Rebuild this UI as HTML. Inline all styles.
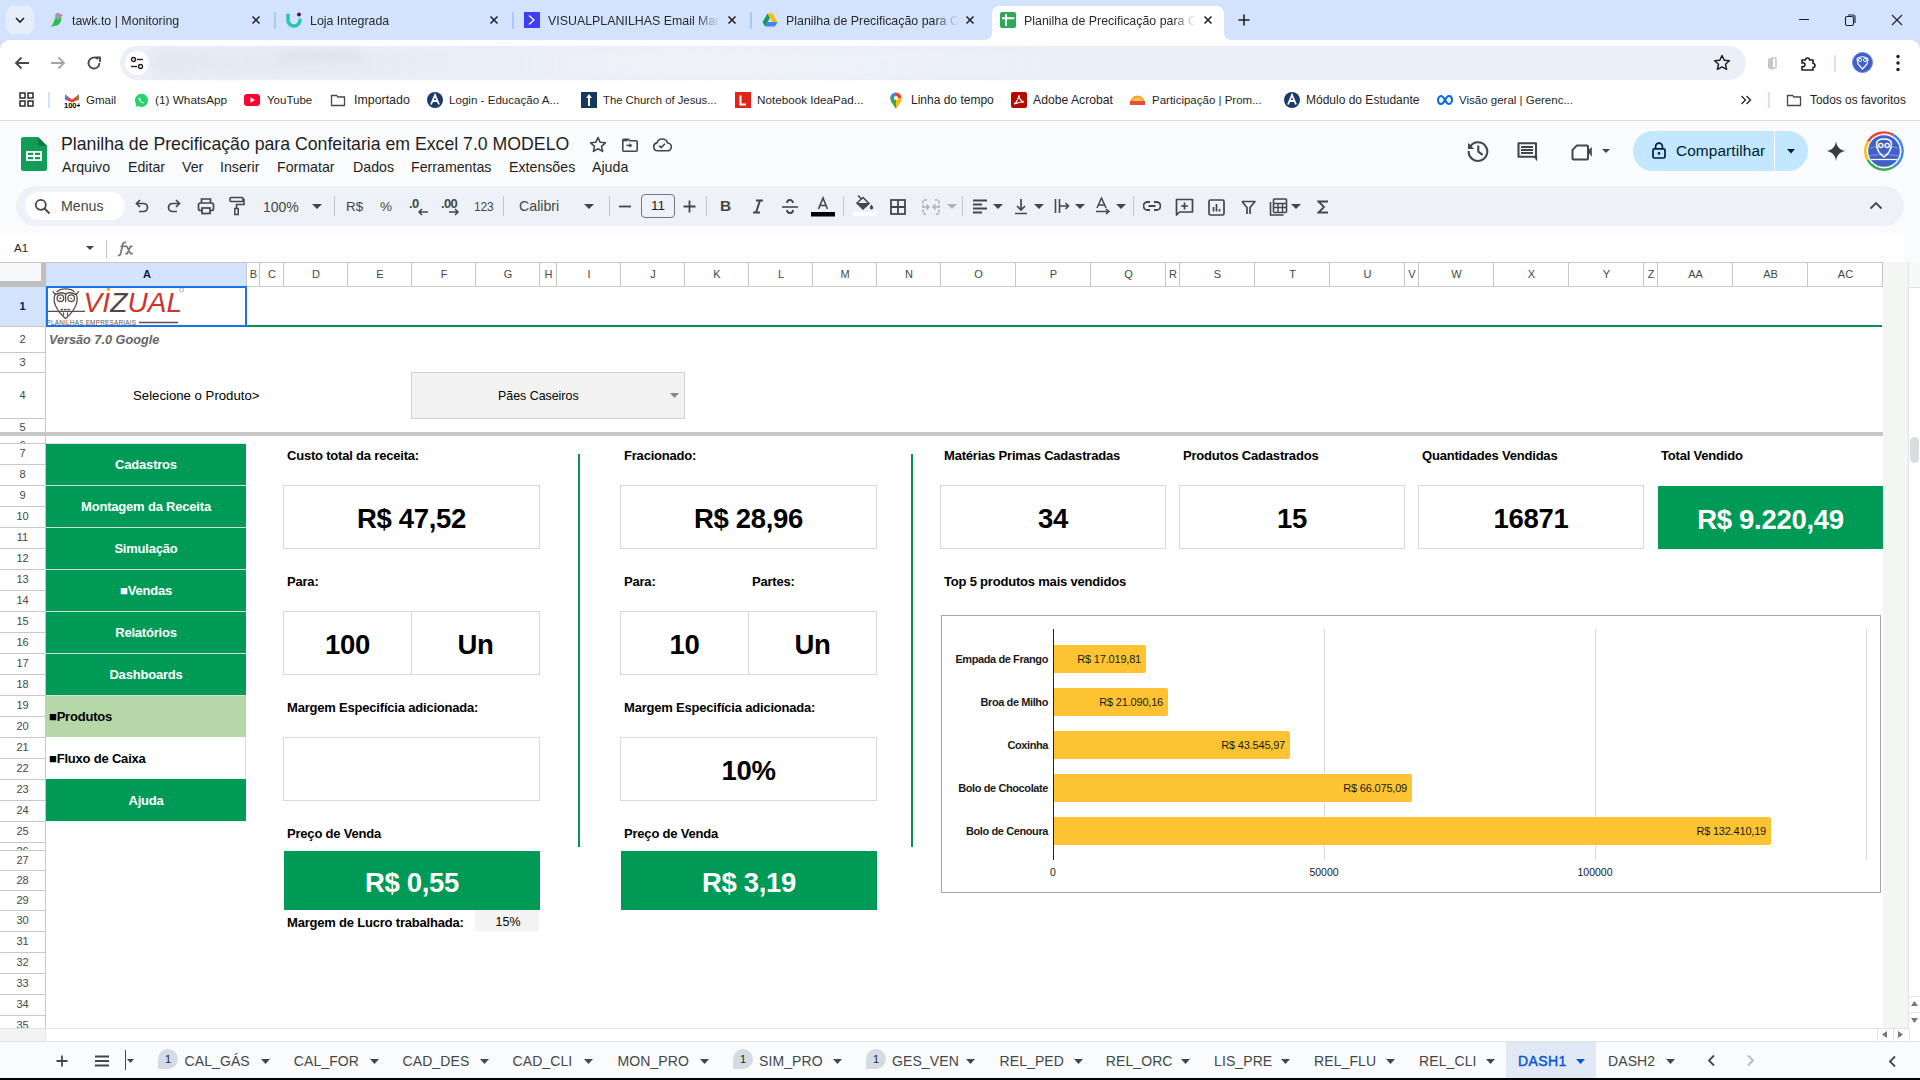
<!DOCTYPE html>
<html><head><meta charset="utf-8">
<style>
*{margin:0;padding:0;box-sizing:border-box}
html,body{width:1920px;height:1080px;overflow:hidden;background:#fff;font-family:"Liberation Sans",sans-serif;color:#1f1f1f}
.a{position:absolute}
svg{display:block}
/* chrome */
#tabstrip{left:0;top:0;width:1920px;height:56px;background:#d3e3fd}
.tab{position:absolute;top:6px;height:34px;width:238px}
.tab .fav{position:absolute;left:8px;top:6px;width:16px;height:16px}
.tab .tt{position:absolute;left:32px;top:6px;font-size:12.4px;color:#2a2a2a;white-space:nowrap;overflow:hidden;width:172px;line-height:18px;-webkit-mask-image:linear-gradient(90deg,#000 86%,transparent)}
.tab .x{position:absolute;left:208px;top:6px;width:16px;height:16px}
.sep{position:absolute;top:12px;width:2px;height:17px;background:#a8c7fa;border-radius:1px}
#toolbar{left:0;top:40px;width:1920px;height:46px;background:#fff;border-radius:10px 10px 0 0}
#omni{left:120px;top:46px;width:1626px;height:34px;border-radius:17px;background:#ebeff7}
#bmbar{left:0;top:86px;width:1920px;height:34px;background:#fff}
.bm{position:absolute;top:92px;height:16px;font-size:12.4px;line-height:16px;color:#1f1f1f;white-space:nowrap}
.bm i{position:absolute;left:0;top:0;width:16px;height:16px;display:block}
.bm span{position:absolute;left:22px;top:0}
.ch{position:absolute;top:263px;height:23px;line-height:23px;text-align:center;padding-left:2px;font-size:11px;color:#444746}
.rh{position:absolute;left:0;width:45px;overflow:hidden;text-align:center;font-size:11px;color:#444746}
.t{position:absolute;white-space:nowrap;line-height:16px}
.lb{font-size:13px;font-weight:bold;color:#000;letter-spacing:-0.2px}
.btn{position:absolute;left:46px;width:200px;font-size:13px;font-weight:bold;text-align:center;line-height:44px;white-space:nowrap;letter-spacing:-0.2px}
.g{background:#009a57;color:#fff}
.box{position:absolute;border:1px solid #d9d9d9;background:#fff;text-align:center;font-size:27.5px;font-weight:bold;color:#000;display:flex;align-items:center;justify-content:center;padding-top:4px;letter-spacing:-0.3px}
.gbox{background:#009a57;border-color:#009a57;color:#fff}
.bar{position:absolute;left:1054px;height:28px;background:#fdc333;border-radius:0 2px 2px 0;font-size:11px;color:#1a1a1a;text-align:right;padding-right:5px;line-height:28px;white-space:nowrap;letter-spacing:-0.2px}
.cl{position:absolute;left:900px;width:148px;text-align:right;font-size:11px;font-weight:bold;color:#1a1a1a;line-height:16px;white-space:nowrap;letter-spacing:-0.4px}
.ax{position:absolute;width:60px;text-align:center;font-size:10.5px;color:#1a1a1a;line-height:14px}
.stab{position:absolute;top:1052px;font-size:14px;line-height:18px;color:#444746;white-space:nowrap;letter-spacing:0.1px}
</style></head><body>
<!-- ============ CHROME TAB STRIP ============ -->
<div id="tabstrip" class="a">
  <div class="a" style="left:6px;top:6px;width:28px;height:28px;border-radius:8px;background:#e6eefc"></div>
  <svg class="a" style="left:13px;top:14px" width="14" height="12" viewBox="0 0 14 12"><path d="M3 4l4 4 4-4" fill="none" stroke="#1f1f1f" stroke-width="1.6"/></svg>

  <!-- tab1 -->
  <div class="tab" style="left:40px">
    <svg class="fav" viewBox="0 0 16 16"><path d="M2 15c2-1 3-3 4-6 1-3 3-5 5-5 2 0 3 2 2 5-1 3-4 5-7 5z" fill="#2dbf4b"/><circle cx="10" cy="4" r="3" fill="#9aa0a6"/><path d="M12 2l3 1-2 2z" fill="#f06292"/><path d="M9 1l2 1-2 1z" fill="#f06292"/></svg>
    <div class="tt">tawk.to | Monitoring</div>
    <svg class="x" viewBox="0 0 16 16"><path d="M4.5 4.5l7 7M11.5 4.5l-7 7" stroke="#1f1f1f" stroke-width="1.5"/></svg>
  </div>
  <div class="sep" style="left:274px"></div>
  <!-- tab2 -->
  <div class="tab" style="left:278px">
    <svg class="fav" viewBox="0 0 16 16"><path d="M2 3v5a6 6 0 0 0 12 0" fill="none" stroke="#2ec4b6" stroke-width="3.6" stroke-linecap="round"/><circle cx="13" cy="2.5" r="2" fill="#3a1f5d"/></svg>
    <div class="tt">Loja Integrada</div>
    <svg class="x" viewBox="0 0 16 16"><path d="M4.5 4.5l7 7M11.5 4.5l-7 7" stroke="#1f1f1f" stroke-width="1.5"/></svg>
  </div>
  <div class="sep" style="left:512px"></div>
  <!-- tab3 -->
  <div class="tab" style="left:516px">
    <svg class="fav" viewBox="0 0 16 16"><rect width="16" height="16" fill="#3b3ff0"/><path d="M5 3.5l5 4.5-5 4.5" fill="none" stroke="#fff" stroke-width="1.3"/></svg>
    <div class="tt">VISUALPLANILHAS Email Marketing</div>
    <svg class="x" viewBox="0 0 16 16"><path d="M4.5 4.5l7 7M11.5 4.5l-7 7" stroke="#1f1f1f" stroke-width="1.5"/></svg>
  </div>
  <div class="sep" style="left:750px"></div>
  <!-- tab4 -->
  <div class="tab" style="left:754px">
    <svg class="fav" viewBox="0 0 16 16"><path d="M5.5 1.5h5l5 8.5h-5z" fill="#fbbc04"/><path d="M5.5 1.5L0.5 10l2.5 4.5 5-8.5z" fill="#0f9d58"/><path d="M3 14.5h10l2.5-4.5h-10z" fill="#4285f4"/></svg>
    <div class="tt">Planilha de Precificação para Confeitaria</div>
    <svg class="x" viewBox="0 0 16 16"><path d="M4.5 4.5l7 7M11.5 4.5l-7 7" stroke="#1f1f1f" stroke-width="1.5"/></svg>
  </div>
  <!-- active tab -->
  <svg class="a" style="left:984px;top:6px" width="248" height="34" viewBox="0 0 248 34"><path d="M0 34c6 0 8-3 8-8V8c0-5 3-8 8-8h216c5 0 8 3 8 8v18c0 5 2 8 8 8z" fill="#fff"/></svg>
  <div class="tab" style="left:992px">
    <svg class="fav" viewBox="0 0 16 16"><rect x="0" y="0" width="16" height="16" rx="2" fill="#2ea85a"/><path d="M2 6.3h12.3M6 2v12" stroke="#fff" stroke-width="2"/></svg>
    <div class="tt">Planilha de Precificação para Confeitaria</div>
    <svg class="x" viewBox="0 0 16 16"><path d="M4.5 4.5l7 7M11.5 4.5l-7 7" stroke="#1f1f1f" stroke-width="1.5"/></svg>
  </div>
  <svg class="a" style="left:1236px;top:12px" width="16" height="16" viewBox="0 0 16 16"><path d="M8 2.5v11M2.5 8h11" stroke="#1f1f1f" stroke-width="1.6"/></svg>
  <!-- window controls -->
  <svg class="a" style="left:1798px;top:12px" width="14" height="14" viewBox="0 0 14 14"><path d="M1 7.5h10" stroke="#1f1f1f" stroke-width="1"/></svg>
  <svg class="a" style="left:1844px;top:13px" width="14" height="14" viewBox="0 0 14 14"><rect x="1.5" y="3.5" width="8" height="9" rx="1.5" fill="none" stroke="#1f1f1f" stroke-width="1.1"/><path d="M4 2h5a2 2 0 0 1 2 2v6" fill="none" stroke="#1f1f1f" stroke-width="1.1"/></svg>
  <svg class="a" style="left:1891px;top:14px" width="12" height="12" viewBox="0 0 12 12"><path d="M1 1l10 10M11 1L1 11" stroke="#1f1f1f" stroke-width="1.1"/></svg>
</div>

<!-- ============ CHROME TOOLBAR ============ -->
<div id="toolbar" class="a"></div>
<svg class="a" style="left:12px;top:54px" width="20" height="18" viewBox="0 0 20 18"><path d="M17 9H4M9.5 3.5L4 9l5.5 5.5" fill="none" stroke="#474747" stroke-width="1.8"/></svg>
<svg class="a" style="left:48px;top:54px" width="20" height="18" viewBox="0 0 20 18"><path d="M3 9h13M10.5 3.5L16 9l-5.5 5.5" fill="none" stroke="#a5a5a5" stroke-width="1.8"/></svg>
<svg class="a" style="left:85px;top:54px" width="18" height="18" viewBox="0 0 18 18"><path d="M14.5 9a5.5 5.5 0 1 1-1.6-3.9" fill="none" stroke="#474747" stroke-width="1.8"/><path d="M10.5 3.5h4.5V8" fill="none" stroke="#474747" stroke-width="1.8"/></svg>
<div id="omni" class="a"></div>
<div class="a" style="left:125px;top:51px;width:24px;height:24px;border-radius:12px;background:#fff"></div>
<svg class="a" style="left:130px;top:56px" width="14" height="14" viewBox="0 0 14 14"><circle cx="3.5" cy="3.5" r="2" fill="none" stroke="#1f1f1f" stroke-width="1.4"/><path d="M7 3.5h6" stroke="#1f1f1f" stroke-width="1.4"/><circle cx="10.5" cy="10.5" r="2" fill="none" stroke="#1f1f1f" stroke-width="1.4"/><path d="M1 10.5h6" stroke="#1f1f1f" stroke-width="1.4"/></svg>
<!-- blurred url -->
<div class="a" style="left:150px;top:50px;width:900px;height:26px;background:linear-gradient(90deg,rgba(226,231,240,0.9),rgba(232,236,244,0.8) 30%,rgba(240,243,249,0.7) 60%,rgba(236,240,248,0.6) 100%);filter:blur(5px);border-radius:13px"></div>
<div class="a" style="left:280px;top:52px;width:80px;height:8px;background:rgba(210,215,225,0.5);filter:blur(4px)"></div>
<svg class="a" style="left:1712px;top:53px" width="20" height="20" viewBox="0 0 20 20"><path d="M10 2.5l2.2 4.8 5.2.5-3.9 3.5 1.1 5.1L10 13.8l-4.6 2.6 1.1-5.1-3.9-3.5 5.2-.5z" fill="none" stroke="#1f1f1f" stroke-width="1.5" stroke-linejoin="round"/></svg>
<svg class="a" style="left:1764px;top:54px" width="18" height="18" viewBox="0 0 18 18"><path d="M4 5l5-2v13l-5-2z" fill="#c4c7c5"/><rect x="8" y="4" width="4" height="10" rx="1" fill="none" stroke="#c4c7c5" stroke-width="1.5"/></svg>
<svg class="a" style="left:1799px;top:53px" width="20" height="20" viewBox="0 0 20 20"><path d="M3 7h3.5a2 2 0 1 1 4 0H14v3.5a2 2 0 1 1 0 4V17H3v-3.5a2 2 0 1 0 0-3.5z" fill="none" stroke="#1f1f1f" stroke-width="1.6" stroke-linejoin="round"/></svg>
<div class="a" style="left:1834px;top:55px;width:2px;height:17px;background:#d3e3fd"></div>
<svg class="a" style="left:1852px;top:52px" width="21" height="21" viewBox="0 0 21 21"><circle cx="10.5" cy="10.5" r="10" fill="#3f5fc9"/><circle cx="10.5" cy="10.5" r="10" fill="none" stroke="#6b86d9" stroke-width="1"/><path d="M5 7c2-3 9-3 11 0l-1 5-4.5 5-4.5-5z" fill="none" stroke="#fff" stroke-width="1.2"/><circle cx="8" cy="8" r="1.6" fill="none" stroke="#fff" stroke-width="1"/><circle cx="13" cy="8" r="1.6" fill="none" stroke="#fff" stroke-width="1"/></svg>
<svg class="a" style="left:1890px;top:53px" width="16" height="20" viewBox="0 0 16 20"><circle cx="8" cy="3.5" r="1.7" fill="#1f1f1f"/><circle cx="8" cy="10" r="1.7" fill="#1f1f1f"/><circle cx="8" cy="16.5" r="1.7" fill="#1f1f1f"/></svg>

<!-- ============ BOOKMARKS ============ -->
<div id="bmbar" class="a"></div>
<svg class="a" style="left:19px;top:92px" width="15" height="15" viewBox="0 0 15 15"><g fill="none" stroke="#1f1f1f" stroke-width="1.4"><rect x="1" y="1" width="5" height="5"/><rect x="9" y="1" width="5" height="5"/><rect x="1" y="9" width="5" height="5"/><rect x="9" y="9" width="5" height="5"/></g></svg>
<div class="a" style="left:48px;top:92px;width:2px;height:16px;background:#d3e3fd"></div>
<svg class="a" style="left:64px;top:92px" width="16" height="16" viewBox="0 0 16 16"><path d="M1 2.5l7 5 7-5v5l-7 3-7-3z" fill="#ea4335"/><path d="M1 2.5v5l2 1V4z" fill="#4285f4"/><path d="M15 2.5v5l-2 1V4z" fill="#34a853"/><text x="0" y="15.5" font-size="7.5" font-family="Liberation Sans" font-weight="bold" fill="#000">100+</text></svg>
<div class="bm" style="left:86px;font-size:11.5px">Gmail</div>
<svg class="a" style="left:134px;top:93px" width="15" height="15" viewBox="0 0 15 15"><circle cx="7.5" cy="7.3" r="6.6" fill="#25d366"/><path d="M1.5 14l1-3.5 3 2z" fill="#25d366"/><path d="M5 4.5c-.7.6-.6 1.8.3 3 1 1.4 2.3 2.5 3.6 2.8.8.2 1.4-.2 1.6-.8l-1.3-.8-.7.6c-.8-.3-1.8-1.2-2.2-2l.5-.7-.6-1.4z" fill="#fff"/></svg>
<div class="bm" style="left:155px;font-size:11.8px">(1) WhatsApp</div>
<svg class="a" style="left:244px;top:94px" width="16" height="12" viewBox="0 0 16 12"><rect width="16" height="12" rx="3" fill="#ff0033"/><path d="M6.5 3.3v5.4L11 6z" fill="#fff"/></svg>
<div class="bm" style="left:267px;font-size:11.5px">YouTube</div>
<svg class="a" style="left:330px;top:92px" width="16" height="16" viewBox="0 0 16 16"><path d="M1.5 3.5h5l1.5 1.5h6.5v8.5h-13z" fill="none" stroke="#474747" stroke-width="1.3"/></svg>
<div class="bm" style="left:354px;font-size:12.4px">Importado</div>
<svg class="a" style="left:427px;top:92px" width="16" height="16" viewBox="0 0 16 16"><circle cx="8" cy="8" r="8" fill="#1b3a6b"/><path d="M4 12.5L8 3l4 9.5M5.5 9h5" fill="none" stroke="#fff" stroke-width="1.8"/></svg>
<div class="bm" style="left:449px;font-size:11.6px">Login - Educação A...</div>
<svg class="a" style="left:581px;top:92px" width="16" height="16" viewBox="0 0 16 16"><rect width="16" height="16" fill="#16385c"/><path d="M8 2l3 4H9v8H7V6H5z" fill="#fff"/></svg>
<div class="bm" style="left:603px;font-size:11.3px">The Church of Jesus...</div>
<svg class="a" style="left:735px;top:92px" width="16" height="16" viewBox="0 0 16 16"><rect width="16" height="16" fill="#e2231a"/><path d="M5.5 3.5v9h5.5" fill="none" stroke="#fff" stroke-width="2"/></svg>
<div class="bm" style="left:757px;font-size:11.7px">Notebook IdeaPad...</div>
<svg class="a" style="left:890px;top:92px" width="12" height="17" viewBox="0 0 12 17"><path d="M6 16.5C3 12 .5 9.5.5 6a5.5 5.5 0 0 1 11 0c0 3.5-2.5 6-5.5 10.5z" fill="#ea4335"/><path d="M6 16.5C3 12 .5 9.5.5 6c0-1.5.5-2.8 1.5-3.8L6 6z" fill="#34a853"/><path d="M.5 6A5.5 5.5 0 0 1 6 .5V6z" fill="#4285f4"/><path d="M11.5 6c0 3.5-2.5 6-5.5 10.5V6z" fill="#fbbc04"/><circle cx="6" cy="6" r="2" fill="#fff"/></svg>
<div class="bm" style="left:911px;font-size:12px">Linha do tempo</div>
<svg class="a" style="left:1011px;top:92px" width="16" height="16" viewBox="0 0 16 16"><rect width="16" height="16" rx="2" fill="#b30b00"/><path d="M3 12c2-1 4-4 5-9 0 3 2 6 5 7-3 0-7 1-10 2z" fill="none" stroke="#fff" stroke-width="1.1"/></svg>
<div class="bm" style="left:1033px;font-size:12.2px">Adobe Acrobat</div>
<svg class="a" style="left:1129px;top:93px" width="17" height="14" viewBox="0 0 17 14"><path d="M1 10a7.5 7.5 0 0 1 15 0z" fill="#f5a623"/><path d="M3 10a5.5 5.5 0 0 1 11 0z" fill="#f7c35f"/><rect x="1" y="8" width="15" height="4" fill="#e94e3a"/></svg>
<div class="bm" style="left:1152px;font-size:11.5px">Participação | Prom...</div>
<svg class="a" style="left:1284px;top:92px" width="16" height="16" viewBox="0 0 16 16"><circle cx="8" cy="8" r="8" fill="#1b3a6b"/><path d="M4 12.5L8 3l4 9.5M5.5 9h5" fill="none" stroke="#fff" stroke-width="1.8"/></svg>
<div class="bm" style="left:1306px;font-size:12px">Módulo do Estudante</div>
<svg class="a" style="left:1437px;top:94px" width="16" height="12" viewBox="0 0 16 12"><path d="M4 10c-2 0-3-2-3-4s1.5-4 3-4c2 0 3 2 4 4s2 4 4 4c1.5 0 3-2 3-4s-1-4-3-4c-2 0-3 2-4 4s-2 4-4 4z" fill="none" stroke="#0668e1" stroke-width="2"/></svg>
<div class="bm" style="left:1459px;font-size:11.5px">Visão geral | Gerenc...</div>
<svg class="a" style="left:1740px;top:94px" width="12" height="12" viewBox="0 0 12 12"><path d="M1.5 2l4 4-4 4M6.5 2l4 4-4 4" fill="none" stroke="#1f1f1f" stroke-width="1.3"/></svg>
<div class="a" style="left:1768px;top:92px;width:2px;height:16px;background:#d3e3fd"></div>
<svg class="a" style="left:1786px;top:92px" width="16" height="16" viewBox="0 0 16 16"><path d="M1.5 3.5h5l1.5 1.5h6.5v8.5h-13z" fill="none" stroke="#474747" stroke-width="1.3"/></svg>
<div class="bm" style="left:1810px;font-size:11.9px">Todos os favoritos</div>
<div class="a" style="left:0;top:120px;width:1920px;height:1px;background:#dadce0"></div>


<!-- ============ SHEETS HEADER ============ -->
<div class="a" style="left:0;top:121px;width:1920px;height:112px;background:#f9fbfd"></div>
<svg class="a" style="left:21px;top:137px" width="26" height="34" viewBox="0 0 26 34"><path d="M2.5 0H17l9 9v22.5a2.5 2.5 0 0 1-2.5 2.5h-21A2.5 2.5 0 0 1 0 31.5v-29A2.5 2.5 0 0 1 2.5 0z" fill="#0f9d58"/><path d="M17 0l9 9h-6.5A2.5 2.5 0 0 1 17 6.5z" fill="#0a7a43"/><path d="M5 14h16v10H5z" fill="#fff"/><path d="M6.8 15.8h5.3v2.3H6.8zM13.9 15.8h5.3v2.3h-5.3zM6.8 19.9h5.3v2.3H6.8zM13.9 19.9h5.3v2.3h-5.3z" fill="#0f9d58"/></svg>
<div class="a" style="left:61px;top:133px;font-size:17.7px;line-height:22px;color:#1f1f1f;white-space:nowrap">Planilha de Precificação para Confeitaria em Excel 7.0 MODELO</div>
<svg class="a" style="left:588px;top:135px" width="20" height="20" viewBox="0 0 20 20"><path d="M10 2.5l2.2 4.8 5.2.5-3.9 3.5 1.1 5.1L10 13.8l-4.6 2.6 1.1-5.1-3.9-3.5 5.2-.5z" fill="none" stroke="#444746" stroke-width="1.6" stroke-linejoin="round"/></svg>
<svg class="a" style="left:621px;top:138px" width="18" height="14" viewBox="0 0 18 14"><path d="M1.8 2.2a1 1 0 0 1 1-1h4.4l1.6 1.6h6.4a1 1 0 0 1 1 1v8.4a1 1 0 0 1-1 1H2.8a1 1 0 0 1-1-1z" fill="none" stroke="#444746" stroke-width="1.6"/><path d="M1.8 2.5h5" stroke="#444746" stroke-width="1.6"/><path d="M5.5 7.4h3.5" stroke="#444746" stroke-width="1.6"/><path d="M8.5 5l3 2.4-3 2.4z" fill="#444746"/></svg>
<svg class="a" style="left:652px;top:137px" width="20" height="15" viewBox="0 0 20 15"><path d="M5.5 13.8a4 4 0 0 1-.6-7.9A5.6 5.6 0 0 1 15.6 6a3.9 3.9 0 0 1-.4 7.8z" fill="none" stroke="#444746" stroke-width="1.6"/><path d="M7.2 8.6l2 2 3.8-3.8" fill="none" stroke="#444746" stroke-width="1.6"/></svg>
<div class="a" style="left:0;top:158px;font-size:14.2px;line-height:18px;color:#1f1f1f;white-space:nowrap">
 <span class="a" style="left:62px">Arquivo</span><span class="a" style="left:128px">Editar</span><span class="a" style="left:182px">Ver</span><span class="a" style="left:220px">Inserir</span><span class="a" style="left:277px">Formatar</span><span class="a" style="left:353px">Dados</span><span class="a" style="left:411px">Ferramentas</span><span class="a" style="left:509px">Extensões</span><span class="a" style="left:592px">Ajuda</span>
</div>
<!-- right header icons -->
<svg class="a" style="left:1464px;top:138px" width="28" height="26" viewBox="1464 138 28 26"><path d="M1470.2 146.5A9.3 9.3 0 1 1 1468.7 151" fill="none" stroke="#444746" stroke-width="2.1"/><path d="M1468 142.8v6.2h6.2z" fill="#444746"/><path d="M1478.3 145.5v6.2l4.3 3.2" fill="none" stroke="#444746" stroke-width="2.1"/></svg>
<svg class="a" style="left:1514px;top:140px" width="26" height="24" viewBox="1514 140 26 24"><path d="M1518.5 143.2h17.5v13.5h-17.5z" fill="none" stroke="#444746" stroke-width="2.1" stroke-linejoin="round"/><path d="M1533 156h4.2v5.6z" fill="#444746"/><path d="M1521 147h12M1521 150h12M1521 153h12" stroke="#444746" stroke-width="1.8"/></svg>
<svg class="a" style="left:1570px;top:142px" width="24" height="20" viewBox="1570 142 24 20"><path d="M1577 145.4h10a1 1 0 0 1 1 1v12a1 1 0 0 1-1 1h-13.5a1 1 0 0 1-1-1v-8.5z" fill="none" stroke="#444746" stroke-width="2" stroke-linejoin="round"/><path d="M1587.5 151l4.3-4v9.9z" fill="#444746"/></svg>
<svg class="a" style="left:1602px;top:149px" width="8" height="5" viewBox="0 0 8 5"><path d="M0 0h8L4 4z" fill="#444746"/></svg>
<div class="a" style="left:1633px;top:131px;width:175px;height:40px;border-radius:20px;background:#c2e7ff"></div>
<div class="a" style="left:1774px;top:131px;width:1px;height:40px;background:#f9fbfd"></div>
<svg class="a" style="left:1652px;top:142px" width="14" height="17" viewBox="0 0 14 17"><rect x="1" y="6.8" width="12" height="9.2" rx="1.3" fill="none" stroke="#001d35" stroke-width="1.7"/><path d="M3.6 6.8V4.6a3.4 3.4 0 0 1 6.8 0v2.2" fill="none" stroke="#001d35" stroke-width="1.7"/><circle cx="7" cy="11.4" r="1.3" fill="#001d35"/></svg>
<div class="a" style="left:1676px;top:141px;font-size:15.4px;line-height:20px;color:#001d35;white-space:nowrap;letter-spacing:0.1px">Compartilhar</div>
<svg class="a" style="left:1787px;top:149px" width="8" height="5" viewBox="0 0 8 5"><path d="M0 0h8L4 4.5z" fill="#001d35"/></svg>
<svg class="a" style="left:1826px;top:141px" width="20" height="20" viewBox="0 0 21 21"><path d="M10.5 0C11 6 15 10 21 10.5 15 11 11 15 10.5 21 10 15 6 11 0 10.5 6 10 10 6 10.5 0z" fill="#3c3c3c"/></svg>
<svg class="a" style="left:1864px;top:131px" width="40" height="40" viewBox="0 0 40 40"><g transform="rotate(-60 20 20)" fill="none" stroke-width="2.4"><circle cx="20" cy="20" r="18.6" stroke="#4285f4" stroke-dasharray="38.9 78"/><circle cx="20" cy="20" r="18.6" stroke="#34a853" stroke-dasharray="0 38.9 29.2 50"/><circle cx="20" cy="20" r="18.6" stroke="#fbbc04" stroke-dasharray="0 68.1 19.5 40"/><circle cx="20" cy="20" r="18.6" stroke="#ea4335" stroke-dasharray="0 87.6 29.3 0"/></g><circle cx="20" cy="20" r="15.8" fill="#4060c8"/><path d="M6 17c6-2 18-3 28 0M5 25c8-2 20-2 30 0" stroke="#6d87dd" stroke-width="1.5" fill="none"/><path d="M12.5 13c0-3 3-5 7.5-5s7.5 2 7.5 5c0 5-2 9-7.5 13-5.5-4-7.5-8-7.5-13z" fill="none" stroke="#fff" stroke-width="1.5"/><circle cx="16.8" cy="14.5" r="2.2" fill="none" stroke="#fff" stroke-width="1.2"/><circle cx="23.2" cy="14.5" r="2.2" fill="none" stroke="#fff" stroke-width="1.2"/><path d="M7 28.5h26" stroke="#fff" stroke-width="1.2"/></svg>

<!-- toolbar pill -->
<div class="a" style="left:16px;top:186px;width:1888px;height:40px;border-radius:20px;background:#eef2f8"></div>
<div class="a" style="left:25px;top:192px;width:100px;height:28px;border-radius:14px;background:#fff"></div>
<svg class="a" style="left:34px;top:198px" width="17" height="17" viewBox="0 0 17 17"><circle cx="6.8" cy="6.8" r="5" fill="none" stroke="#444746" stroke-width="1.8"/><path d="M10.5 10.5l5 5" stroke="#444746" stroke-width="1.9"/></svg>
<div class="a" style="left:61px;top:197px;font-size:14.2px;line-height:18px;color:#444746">Menus</div>
<svg class="a" style="left:134px;top:198px" width="16" height="16" viewBox="0 0 16 16"><path d="M3 5.5h6.5a4 4 0 0 1 0 8H5" fill="none" stroke="#444746" stroke-width="1.7"/><path d="M6 2l-3.5 3.5L6 9" fill="none" stroke="#444746" stroke-width="1.7"/></svg>
<svg class="a" style="left:166px;top:198px" width="16" height="16" viewBox="0 0 16 16"><path d="M13 5.5H6.5a4 4 0 0 0 0 8H11" fill="none" stroke="#444746" stroke-width="1.7"/><path d="M10 2l3.5 3.5L10 9" fill="none" stroke="#444746" stroke-width="1.7"/></svg>
<svg class="a" style="left:197px;top:197px" width="18" height="18" viewBox="0 0 18 18"><path d="M4.5 6V2h9v4" fill="none" stroke="#444746" stroke-width="1.7"/><rect x="1.5" y="6" width="15" height="7.5" rx="2" fill="none" stroke="#444746" stroke-width="1.7"/><rect x="5" y="11" width="8" height="5.5" fill="#eef2f8" stroke="#444746" stroke-width="1.7"/></svg>
<svg class="a" style="left:229px;top:196px" width="16" height="20" viewBox="0 0 16 20"><rect x="1" y="1.5" width="13" height="4" rx="1" fill="none" stroke="#444746" stroke-width="1.6"/><path d="M14 3.5h1v5H7.5v4" fill="none" stroke="#444746" stroke-width="1.6"/><rect x="5.8" y="12.5" width="3.4" height="6" fill="none" stroke="#444746" stroke-width="1.5"/></svg>
<div class="a" style="left:263px;top:198px;font-size:14px;line-height:18px;color:#444746">100%</div>
<svg class="a" style="left:312px;top:204px" width="10" height="6" viewBox="0 0 10 6"><path d="M0 0h10L5 5z" fill="#444746"/></svg>
<div class="a" style="left:334px;top:196px;width:1px;height:20px;background:#c7c7c7"></div>
<div class="a" style="left:346px;top:198px;font-size:13.4px;line-height:18px;color:#444746">R$</div>
<div class="a" style="left:380px;top:198px;font-size:13.4px;line-height:18px;color:#444746">%</div>
<div class="a" style="left:409px;top:196px;font-size:13px;line-height:16px;color:#444746;font-weight:bold;letter-spacing:-0.5px">.0</div>
<svg class="a" style="left:417px;top:208px" width="12" height="8" viewBox="0 0 12 8"><path d="M11 4H2M5 1L2 4l3 3" fill="none" stroke="#444746" stroke-width="1.5"/></svg>
<div class="a" style="left:441px;top:196px;font-size:13px;line-height:16px;color:#444746;font-weight:bold;letter-spacing:-0.7px">.00</div>
<svg class="a" style="left:448px;top:208px" width="12" height="8" viewBox="0 0 12 8"><path d="M1 4h9M7 1l3 3-3 3" fill="none" stroke="#444746" stroke-width="1.5"/></svg>
<div class="a" style="left:474px;top:199px;font-size:12px;line-height:16px;color:#444746;letter-spacing:-0.2px">123</div>
<div class="a" style="left:503px;top:196px;width:1px;height:20px;background:#c7c7c7"></div>
<div class="a" style="left:519px;top:197px;font-size:14.2px;line-height:18px;color:#444746">Calibri</div>
<svg class="a" style="left:584px;top:204px" width="10" height="6" viewBox="0 0 10 6"><path d="M0 0h10L5 5z" fill="#444746"/></svg>
<div class="a" style="left:609px;top:196px;width:1px;height:20px;background:#c7c7c7"></div>
<svg class="a" style="left:619px;top:205px" width="13" height="3" viewBox="0 0 13 3"><path d="M0 1.5h12" stroke="#444746" stroke-width="1.8"/></svg>
<div class="a" style="left:641px;top:194px;width:34px;height:24px;border:1px solid #747775;border-radius:4px;font-size:13.5px;line-height:22px;text-align:center;color:#1f1f1f">11</div>
<svg class="a" style="left:683px;top:200px" width="13" height="13" viewBox="0 0 13 13"><path d="M6.5 0.5v12M0.5 6.5h12" stroke="#444746" stroke-width="1.8"/></svg>
<div class="a" style="left:706px;top:196px;width:1px;height:20px;background:#c7c7c7"></div>
<div class="a" style="left:720px;top:197px;font-size:15.5px;line-height:18px;color:#444746;font-weight:bold">B</div>
<svg class="a" style="left:751px;top:199px" width="14" height="15" viewBox="0 0 14 15"><path d="M5 1.5h7M2 13.5h7M9 1.5L5 13.5" fill="none" stroke="#444746" stroke-width="2"/></svg>
<svg class="a" style="left:781px;top:198px" width="18" height="17" viewBox="0 0 18 17"><path d="M1 9h16" stroke="#444746" stroke-width="1.6"/><path d="M12 5a3 3 0 0 0-6 0M6 12a3 3 0 0 0 6 0" fill="none" stroke="#444746" stroke-width="1.8"/></svg>
<svg class="a" style="left:811px;top:196px" width="24" height="21" viewBox="0 0 24 21"><path d="M7.5 13L12 2l4.5 11M9 9.5h6" fill="none" stroke="#444746" stroke-width="1.6"/><rect x="0" y="16" width="24" height="4.5" fill="#000"/></svg>
<div class="a" style="left:843px;top:196px;width:1px;height:20px;background:#c7c7c7"></div>
<svg class="a" style="left:853px;top:194px" width="24" height="24" viewBox="0 0 24 24"><path d="M5 1.5l3 3M4 9l6-5.5 6 6-6 5.5z" fill="none" stroke="#444746" stroke-width="1.6"/><path d="M4 9h12l-6 5.5z" fill="#444746"/><path d="M18.5 10.5c1 1.5 1.7 2.5 1.7 3.3a1.7 1.7 0 0 1-3.4 0c0-.8.7-1.8 1.7-3.3z" fill="#444746"/><rect x="0" y="18" width="24" height="4" fill="#fff"/></svg>
<svg class="a" style="left:890px;top:199px" width="16" height="16" viewBox="0 0 16 16"><rect x="1" y="1" width="14" height="14" fill="none" stroke="#444746" stroke-width="1.8"/><path d="M8 1v14M1 8h14" stroke="#444746" stroke-width="1.8"/></svg>
<svg class="a" style="left:922px;top:199px" width="18" height="16" viewBox="0 0 18 16"><path d="M5 1H1v14h4M13 1h4v14h-4" fill="none" stroke="#b1b3b5" stroke-width="1.6" stroke-dasharray="3 1.5"/><path d="M1 8h6M4.5 5.5L7 8l-2.5 2.5M17 8h-6M13.5 5.5L11 8l2.5 2.5" fill="none" stroke="#b1b3b5" stroke-width="1.5"/></svg>
<svg class="a" style="left:947px;top:204px" width="10" height="6" viewBox="0 0 10 6"><path d="M0 0h10L5 5z" fill="#b1b3b5"/></svg>
<div class="a" style="left:962px;top:196px;width:1px;height:20px;background:#c7c7c7"></div>
<svg class="a" style="left:972px;top:199px" width="16" height="15" viewBox="0 0 16 15"><path d="M1 1.5h14M1 5.5h9M1 9.5h14M1 13.5h9" stroke="#444746" stroke-width="1.8"/></svg>
<svg class="a" style="left:993px;top:204px" width="10" height="6" viewBox="0 0 10 6"><path d="M0 0h10L5 5z" fill="#444746"/></svg>
<svg class="a" style="left:1014px;top:198px" width="14" height="17" viewBox="0 0 14 17"><path d="M7 1v11M3 8l4 4 4-4M1 15.5h12" fill="none" stroke="#444746" stroke-width="1.7"/></svg>
<svg class="a" style="left:1034px;top:204px" width="10" height="6" viewBox="0 0 10 6"><path d="M0 0h10L5 5z" fill="#444746"/></svg>
<svg class="a" style="left:1054px;top:198px" width="16" height="16" viewBox="0 0 16 16"><path d="M1.5 1v14M5.5 1v14M5.5 8h9M11.5 5l3 3-3 3" fill="none" stroke="#444746" stroke-width="1.6"/></svg>
<svg class="a" style="left:1075px;top:204px" width="10" height="6" viewBox="0 0 10 6"><path d="M0 0h10L5 5z" fill="#444746"/></svg>
<svg class="a" style="left:1095px;top:197px" width="16" height="18" viewBox="0 0 16 18"><path d="M2 11L6.5 1 11 11M3.5 8h6M1 14.5h12M11 12l3 2.5-3 2.5" fill="none" stroke="#444746" stroke-width="1.5"/></svg>
<svg class="a" style="left:1116px;top:204px" width="10" height="6" viewBox="0 0 10 6"><path d="M0 0h10L5 5z" fill="#444746"/></svg>
<div class="a" style="left:1133px;top:196px;width:1px;height:20px;background:#c7c7c7"></div>
<svg class="a" style="left:1143px;top:200px" width="18" height="12" viewBox="0 0 18 12"><path d="M7 2H4.5a4 4 0 0 0 0 8H7M11 2h2.5a4 4 0 0 1 0 8H11M5.5 6h7" fill="none" stroke="#444746" stroke-width="1.8"/></svg>
<svg class="a" style="left:1175px;top:198px" width="19" height="19" viewBox="0 0 19 19"><path d="M1.5 1.5h16v12.5H4.5L1.5 17z" fill="none" stroke="#444746" stroke-width="1.7" stroke-linejoin="round"/><path d="M9.5 4.5v7M6 8h7" stroke="#444746" stroke-width="1.7"/></svg>
<svg class="a" style="left:1208px;top:199px" width="17" height="17" viewBox="0 0 17 17"><rect x="1" y="1" width="15" height="15" rx="1.5" fill="none" stroke="#444746" stroke-width="1.7"/><path d="M5.5 12.5V8M8.5 12.5V5M11.5 12.5V10" stroke="#444746" stroke-width="1.7"/></svg>
<svg class="a" style="left:1241px;top:200px" width="15" height="15" viewBox="0 0 15 15"><path d="M1 1.5h13L9 7.5V14M1 1.5l5 6V14" fill="none" stroke="#444746" stroke-width="1.7" stroke-linejoin="round"/></svg>
<svg class="a" style="left:1269px;top:198px" width="19" height="18" viewBox="0 0 19 18"><path d="M1.5 4v13h13" fill="none" stroke="#444746" stroke-width="1.6"/><rect x="4.5" y="1" width="13" height="13.5" rx="1" fill="none" stroke="#444746" stroke-width="1.6"/><path d="M4.5 5.5h13M4.5 9.5h13M9 5.5v9M13.5 5.5v9" stroke="#444746" stroke-width="1.4"/></svg>
<svg class="a" style="left:1291px;top:204px" width="10" height="6" viewBox="0 0 10 6"><path d="M0 0h10L5 5z" fill="#444746"/></svg>
<svg class="a" style="left:1317px;top:200px" width="12" height="14" viewBox="0 0 12 14"><path d="M11 1.5H1.5L7 7l-5.5 5.5H11" fill="none" stroke="#444746" stroke-width="1.8"/></svg>
<svg class="a" style="left:1869px;top:201px" width="14" height="9" viewBox="0 0 14 9"><path d="M1.5 7.5L7 2l5.5 5.5" fill="none" stroke="#444746" stroke-width="1.8"/></svg>

<!-- formula bar -->
<div class="a" style="left:0;top:233px;width:1904px;height:29px;background:#fff"></div>
<div class="a" style="left:14px;top:240px;font-size:11.5px;line-height:16px;color:#1f1f1f">A1</div>
<svg class="a" style="left:86px;top:246px" width="8" height="5" viewBox="0 0 8 5"><path d="M0 0h8L4 4z" fill="#444746"/></svg>
<div class="a" style="left:106px;top:240px;width:1px;height:18px;background:#c7c7c7"></div>
<svg class="a" style="left:117px;top:241px" width="17" height="16" viewBox="0 0 17 16"><path d="M9 1.6C7.6 0.9 6.2 1.5 5.8 3.2L3.6 12.6C3.2 14.3 2.2 14.8 1 14.2" fill="none" stroke="#777" stroke-width="1.8"/><path d="M3.5 5.3h4.3" stroke="#777" stroke-width="1.6"/><path d="M7.6 5.3h2.2l3.8 7.4h2.2M8.2 12.7h2l3.3-7.4h2" fill="none" stroke="#777" stroke-width="1.7"/></svg>
<!-- ============ GRID ============ -->
<div class="a" style="left:0;top:262px;width:1908px;height:767px;background:#fff"></div>
<div class="a" style="left:1883px;top:262px;width:25px;height:767px;background:#f4f6f4"></div>
<div class="a" style="left:0;top:262px;width:1883px;height:1px;background:#c7c7c7"></div>
<div class="a" style="left:0;top:286px;width:1883px;height:1px;background:#c7c7c7"></div>
<div class="a" style="left:0;top:263px;width:41px;height:18px;background:#f8f9fa"></div>
<div class="a" style="left:41px;top:263px;width:5px;height:24px;background:#c0c0c0"></div>
<div class="a" style="left:0;top:281px;width:46px;height:6px;background:#c0c0c0"></div>
<div class="a" style="left:46px;top:263px;width:200px;height:23px;background:#d3e3fd"></div>
<div class="ch" style="left:46px;width:200px;font-weight:bold;color:#041e49">A</div>
<div class="a" style="left:246px;top:263px;width:1px;height:23px;background:#c7c7c7"></div>
<div class="ch" style="left:246px;width:13px;color:#444746">B</div>
<div class="a" style="left:259px;top:263px;width:1px;height:23px;background:#c7c7c7"></div>
<div class="ch" style="left:259px;width:24px;color:#444746">C</div>
<div class="a" style="left:283px;top:263px;width:1px;height:23px;background:#c7c7c7"></div>
<div class="ch" style="left:283px;width:64px;color:#444746">D</div>
<div class="a" style="left:347px;top:263px;width:1px;height:23px;background:#c7c7c7"></div>
<div class="ch" style="left:347px;width:64px;color:#444746">E</div>
<div class="a" style="left:411px;top:263px;width:1px;height:23px;background:#c7c7c7"></div>
<div class="ch" style="left:411px;width:64px;color:#444746">F</div>
<div class="a" style="left:475px;top:263px;width:1px;height:23px;background:#c7c7c7"></div>
<div class="ch" style="left:475px;width:64px;color:#444746">G</div>
<div class="a" style="left:539px;top:263px;width:1px;height:23px;background:#c7c7c7"></div>
<div class="ch" style="left:539px;width:17px;color:#444746">H</div>
<div class="a" style="left:556px;top:263px;width:1px;height:23px;background:#c7c7c7"></div>
<div class="ch" style="left:556px;width:64px;color:#444746">I</div>
<div class="a" style="left:620px;top:263px;width:1px;height:23px;background:#c7c7c7"></div>
<div class="ch" style="left:620px;width:64px;color:#444746">J</div>
<div class="a" style="left:684px;top:263px;width:1px;height:23px;background:#c7c7c7"></div>
<div class="ch" style="left:684px;width:64px;color:#444746">K</div>
<div class="a" style="left:748px;top:263px;width:1px;height:23px;background:#c7c7c7"></div>
<div class="ch" style="left:748px;width:64px;color:#444746">L</div>
<div class="a" style="left:812px;top:263px;width:1px;height:23px;background:#c7c7c7"></div>
<div class="ch" style="left:812px;width:64px;color:#444746">M</div>
<div class="a" style="left:876px;top:263px;width:1px;height:23px;background:#c7c7c7"></div>
<div class="ch" style="left:876px;width:64px;color:#444746">N</div>
<div class="a" style="left:940px;top:263px;width:1px;height:23px;background:#c7c7c7"></div>
<div class="ch" style="left:940px;width:75px;color:#444746">O</div>
<div class="a" style="left:1015px;top:263px;width:1px;height:23px;background:#c7c7c7"></div>
<div class="ch" style="left:1015px;width:75px;color:#444746">P</div>
<div class="a" style="left:1090px;top:263px;width:1px;height:23px;background:#c7c7c7"></div>
<div class="ch" style="left:1090px;width:75px;color:#444746">Q</div>
<div class="a" style="left:1165px;top:263px;width:1px;height:23px;background:#c7c7c7"></div>
<div class="ch" style="left:1165px;width:14px;color:#444746">R</div>
<div class="a" style="left:1179px;top:263px;width:1px;height:23px;background:#c7c7c7"></div>
<div class="ch" style="left:1179px;width:75px;color:#444746">S</div>
<div class="a" style="left:1254px;top:263px;width:1px;height:23px;background:#c7c7c7"></div>
<div class="ch" style="left:1254px;width:75px;color:#444746">T</div>
<div class="a" style="left:1329px;top:263px;width:1px;height:23px;background:#c7c7c7"></div>
<div class="ch" style="left:1329px;width:75px;color:#444746">U</div>
<div class="a" style="left:1404px;top:263px;width:1px;height:23px;background:#c7c7c7"></div>
<div class="ch" style="left:1404px;width:14px;color:#444746">V</div>
<div class="a" style="left:1418px;top:263px;width:1px;height:23px;background:#c7c7c7"></div>
<div class="ch" style="left:1418px;width:75px;color:#444746">W</div>
<div class="a" style="left:1493px;top:263px;width:1px;height:23px;background:#c7c7c7"></div>
<div class="ch" style="left:1493px;width:75px;color:#444746">X</div>
<div class="a" style="left:1568px;top:263px;width:1px;height:23px;background:#c7c7c7"></div>
<div class="ch" style="left:1568px;width:75px;color:#444746">Y</div>
<div class="a" style="left:1643px;top:263px;width:1px;height:23px;background:#c7c7c7"></div>
<div class="ch" style="left:1643px;width:14px;color:#444746">Z</div>
<div class="a" style="left:1657px;top:263px;width:1px;height:23px;background:#c7c7c7"></div>
<div class="ch" style="left:1657px;width:75px;color:#444746">AA</div>
<div class="a" style="left:1732px;top:263px;width:1px;height:23px;background:#c7c7c7"></div>
<div class="ch" style="left:1732px;width:75px;color:#444746">AB</div>
<div class="a" style="left:1807px;top:263px;width:1px;height:23px;background:#c7c7c7"></div>
<div class="ch" style="left:1807px;width:75px;color:#444746">AC</div>
<div class="a" style="left:1882px;top:263px;width:1px;height:23px;background:#c7c7c7"></div>
<div class="rh" style="top:287px;height:39px;background:#d3e3fd;"><div style="height:39px;line-height:39px;font-weight:bold;color:#041e49;">1</div></div>
<div class="a" style="left:0;top:326px;width:45px;height:1px;background:#c7c7c7"></div>
<div class="rh" style="top:326px;height:26px;"><div style="height:26px;line-height:26px;">2</div></div>
<div class="a" style="left:0;top:352px;width:45px;height:1px;background:#c7c7c7"></div>
<div class="rh" style="top:352px;height:20px;"><div style="height:20px;line-height:20px;">3</div></div>
<div class="a" style="left:0;top:372px;width:45px;height:1px;background:#c7c7c7"></div>
<div class="rh" style="top:372px;height:46px;"><div style="height:46px;line-height:46px;">4</div></div>
<div class="a" style="left:0;top:418px;width:45px;height:1px;background:#c7c7c7"></div>
<div class="rh" style="top:418px;height:14px;"><div style="height:18px;line-height:18px;">5</div></div>
<div class="rh" style="top:436px;height:7px;"><div style="height:18px;line-height:18px;">6</div></div>
<div class="a" style="left:0;top:443px;width:45px;height:1px;background:#c7c7c7"></div>
<div class="rh" style="top:443px;height:21px;"><div style="height:21px;line-height:21px;">7</div></div>
<div class="a" style="left:0;top:464px;width:45px;height:1px;background:#c7c7c7"></div>
<div class="rh" style="top:464px;height:21px;"><div style="height:21px;line-height:21px;">8</div></div>
<div class="a" style="left:0;top:485px;width:45px;height:1px;background:#c7c7c7"></div>
<div class="rh" style="top:485px;height:21px;"><div style="height:21px;line-height:21px;">9</div></div>
<div class="a" style="left:0;top:506px;width:45px;height:1px;background:#c7c7c7"></div>
<div class="rh" style="top:506px;height:21px;"><div style="height:21px;line-height:21px;">10</div></div>
<div class="a" style="left:0;top:527px;width:45px;height:1px;background:#c7c7c7"></div>
<div class="rh" style="top:527px;height:21px;"><div style="height:21px;line-height:21px;">11</div></div>
<div class="a" style="left:0;top:548px;width:45px;height:1px;background:#c7c7c7"></div>
<div class="rh" style="top:548px;height:21px;"><div style="height:21px;line-height:21px;">12</div></div>
<div class="a" style="left:0;top:569px;width:45px;height:1px;background:#c7c7c7"></div>
<div class="rh" style="top:569px;height:21px;"><div style="height:21px;line-height:21px;">13</div></div>
<div class="a" style="left:0;top:590px;width:45px;height:1px;background:#c7c7c7"></div>
<div class="rh" style="top:590px;height:21px;"><div style="height:21px;line-height:21px;">14</div></div>
<div class="a" style="left:0;top:611px;width:45px;height:1px;background:#c7c7c7"></div>
<div class="rh" style="top:611px;height:21px;"><div style="height:21px;line-height:21px;">15</div></div>
<div class="a" style="left:0;top:632px;width:45px;height:1px;background:#c7c7c7"></div>
<div class="rh" style="top:632px;height:21px;"><div style="height:21px;line-height:21px;">16</div></div>
<div class="a" style="left:0;top:653px;width:45px;height:1px;background:#c7c7c7"></div>
<div class="rh" style="top:653px;height:21px;"><div style="height:21px;line-height:21px;">17</div></div>
<div class="a" style="left:0;top:674px;width:45px;height:1px;background:#c7c7c7"></div>
<div class="rh" style="top:674px;height:21px;"><div style="height:21px;line-height:21px;">18</div></div>
<div class="a" style="left:0;top:695px;width:45px;height:1px;background:#c7c7c7"></div>
<div class="rh" style="top:695px;height:21px;"><div style="height:21px;line-height:21px;">19</div></div>
<div class="a" style="left:0;top:716px;width:45px;height:1px;background:#c7c7c7"></div>
<div class="rh" style="top:716px;height:21px;"><div style="height:21px;line-height:21px;">20</div></div>
<div class="a" style="left:0;top:737px;width:45px;height:1px;background:#c7c7c7"></div>
<div class="rh" style="top:737px;height:21px;"><div style="height:21px;line-height:21px;">21</div></div>
<div class="a" style="left:0;top:758px;width:45px;height:1px;background:#c7c7c7"></div>
<div class="rh" style="top:758px;height:21px;"><div style="height:21px;line-height:21px;">22</div></div>
<div class="a" style="left:0;top:779px;width:45px;height:1px;background:#c7c7c7"></div>
<div class="rh" style="top:779px;height:21px;"><div style="height:21px;line-height:21px;">23</div></div>
<div class="a" style="left:0;top:800px;width:45px;height:1px;background:#c7c7c7"></div>
<div class="rh" style="top:800px;height:21px;"><div style="height:21px;line-height:21px;">24</div></div>
<div class="a" style="left:0;top:821px;width:45px;height:1px;background:#c7c7c7"></div>
<div class="rh" style="top:821px;height:21px;"><div style="height:21px;line-height:21px;">25</div></div>
<div class="a" style="left:0;top:842px;width:45px;height:1px;background:#c7c7c7"></div>
<div class="rh" style="top:842px;height:8px;"><div style="height:18px;line-height:18px;">26</div></div>
<div class="a" style="left:0;top:850px;width:45px;height:1px;background:#c7c7c7"></div>
<div class="rh" style="top:850px;height:20px;"><div style="height:20px;line-height:20px;">27</div></div>
<div class="a" style="left:0;top:870px;width:45px;height:1px;background:#c7c7c7"></div>
<div class="rh" style="top:870px;height:20px;"><div style="height:20px;line-height:20px;">28</div></div>
<div class="a" style="left:0;top:890px;width:45px;height:1px;background:#c7c7c7"></div>
<div class="rh" style="top:890px;height:20px;"><div style="height:20px;line-height:20px;">29</div></div>
<div class="a" style="left:0;top:910px;width:45px;height:1px;background:#c7c7c7"></div>
<div class="rh" style="top:910px;height:21px;"><div style="height:21px;line-height:21px;">30</div></div>
<div class="a" style="left:0;top:931px;width:45px;height:1px;background:#c7c7c7"></div>
<div class="rh" style="top:931px;height:21px;"><div style="height:21px;line-height:21px;">31</div></div>
<div class="a" style="left:0;top:952px;width:45px;height:1px;background:#c7c7c7"></div>
<div class="rh" style="top:952px;height:21px;"><div style="height:21px;line-height:21px;">32</div></div>
<div class="a" style="left:0;top:973px;width:45px;height:1px;background:#c7c7c7"></div>
<div class="rh" style="top:973px;height:21px;"><div style="height:21px;line-height:21px;">33</div></div>
<div class="a" style="left:0;top:994px;width:45px;height:1px;background:#c7c7c7"></div>
<div class="rh" style="top:994px;height:21px;"><div style="height:21px;line-height:21px;">34</div></div>
<div class="a" style="left:0;top:1015px;width:45px;height:1px;background:#c7c7c7"></div>
<div class="rh" style="top:1015px;height:13px;"><div style="height:21px;line-height:21px;">35</div></div>
<div class="a" style="left:45px;top:286px;width:1px;height:743px;background:#c7c7c7"></div>
<div class="a" style="left:0;top:432px;width:1883px;height:4px;background:#c6c6c6"></div>
<!-- ============ CONTENT ============ -->
<!-- logo A1 -->
<svg class="a" style="left:46px;top:286px" width="200" height="40" viewBox="0 0 200 40">
  <g fill="none" stroke="#5b4f4c" stroke-width="1.3" stroke-linecap="round">
    <path d="M11 5.8C14 2 25 2 28.2 5.8"/>
    <path d="M7 5.5C7.5 7 8.5 7.8 10 8M32.5 5.5C32 7 31 7.8 29.5 8"/>
    <path d="M9.2 8C8 11 8 16 9.5 19.5 11 23 14 28 19.6 32.6 25.2 28 28.2 23 29.8 19.5 31.3 16 31.3 11 30.2 8"/>
    <path d="M10 8.5C13 6.5 17 6.5 19.6 8 22.2 6.5 26.2 6.5 29.5 8.5M19.6 8v7.5"/>
    <circle cx="14.4" cy="12.2" r="3.3"/><circle cx="25.2" cy="12.2" r="3.3"/>
    <path d="M17.5 29v-2M21.5 29v-2M15 23.5h1.5M18.5 23.5h1.5M22 23.5h1.5"/>
  </g>
  <circle cx="14.4" cy="12.2" r="0.9" fill="#5b4f4c"/><path d="M24.2 12.3h2" stroke="#5b4f4c" stroke-width="1"/>
  <path d="M1 25.4h38" fill="none" stroke="#5b4f4c" stroke-width="1.4"/>
  <text x="37.5" y="26" font-family="Liberation Sans" font-style="italic" font-size="28" fill="#d0342c" letter-spacing="0.1">VI<tspan fill="#4d4644">Z</tspan>UAL</text>
  <circle cx="62.5" cy="3.3" r="1.7" fill="#f2a81d"/>
  <circle cx="135.7" cy="3.7" r="2" fill="none" stroke="#999" stroke-width="0.8"/>
  <text x="0.5" y="38.5" font-family="Liberation Sans" font-size="6.4" fill="#5b4f4c" letter-spacing="0.22">PLANILHAS EMPRESARIAIS</text>
  <path d="M93 36.5h39" stroke="#5b4f4c" stroke-width="1.4"/>
</svg>
<div class="a" style="left:46px;top:286px;width:201px;height:41px;border:2px solid #1a73e8"></div>
<div class="a" style="left:247px;top:325px;width:1635px;height:2px;background:#0a9150"></div>
<div class="t bi" style="left:49px;top:331.5px;color:#666;font-size:12.7px;font-weight:bold;font-style:italic">Versão 7.0 Google</div>
<div class="t" style="left:133px;top:388px;font-size:13.2px;color:#000">Selecione o Produto&gt;</div>
<div class="a" style="left:411px;top:372px;width:274px;height:47px;background:#f2f2f2;border:1px solid #d0d0d0"></div>
<div class="t" style="left:498px;top:388px;font-size:12.4px;color:#000">Pães Caseiros</div>
<svg class="a" style="left:670px;top:393px" width="9" height="5" viewBox="0 0 9 5"><path d="M0 0h9L4.5 5z" fill="#888"/></svg>

<!-- left nav -->
<div class="a" style="left:46px;top:443px;width:200px;height:1px;background:#e3e3e3"></div><div class="btn g" style="top:444px;height:41px;line-height:42px">Cadastros</div>
<div class="btn g" style="top:485px;height:42px">Montagem da Receita</div>
<div class="btn g" style="top:527px;height:42px">Simulação</div>
<div class="btn g" style="top:569px;height:42px">■Vendas</div>
<div class="btn g" style="top:611px;height:42px">Relatórios</div>
<div class="btn g" style="top:653px;height:42px">Dashboards</div>
<div class="btn" style="top:695px;height:42px;background:#b6d7a8;color:#000;text-align:left;padding-left:3px">■Produtos</div>
<div class="btn" style="top:737px;height:42px;background:#fff;color:#000;text-align:left;padding-left:3px;border-right:1px solid #d9d9d9">■Fluxo de Caixa</div>
<div class="btn g" style="top:779px;height:42px">Ajuda</div>
<div class="a" style="left:46px;top:485px;width:200px;height:1px;background:#d9d9d9"></div>
<div class="a" style="left:46px;top:527px;width:200px;height:1px;background:#d9d9d9"></div>
<div class="a" style="left:46px;top:569px;width:200px;height:1px;background:#d9d9d9"></div>
<div class="a" style="left:46px;top:611px;width:200px;height:1px;background:#d9d9d9"></div>
<div class="a" style="left:46px;top:653px;width:200px;height:1px;background:#d9d9d9"></div>
<div class="a" style="left:46px;top:695px;width:200px;height:1px;background:#d9d9d9"></div>

<!-- col 1 -->
<div class="t lb" style="left:287px;top:448px">Custo total da receita:</div>
<div class="box" style="left:283px;top:485px;width:257px;height:64px">R$ 47,52</div>
<div class="t lb" style="left:287px;top:574px">Para:</div>
<div class="box" style="left:283px;top:611px;width:129px;height:64px">100</div>
<div class="box" style="left:411px;top:611px;width:129px;height:64px">Un</div>
<div class="t lb" style="left:287px;top:700px">Margem Especifícia adicionada:</div>
<div class="box" style="left:283px;top:737px;width:257px;height:64px"></div>
<div class="t lb" style="left:287px;top:826px">Preço de Venda</div>
<div class="box gbox" style="left:284px;top:851px;width:256px;height:59px">R$ 0,55</div>
<div class="t lb" style="left:287px;top:915px">Margem de Lucro trabalhada:</div>
<div class="a" style="left:475px;top:910px;width:64px;height:21px;background:#f3f3f3"></div>
<div class="t" style="left:476px;width:64px;text-align:center;top:914px;font-size:12.4px;color:#000">15%</div>
<div class="a" style="left:578px;top:454px;width:2px;height:393px;background:#0a9150"></div>

<!-- col 2 -->
<div class="t lb" style="left:624px;top:448px">Fracionado:</div>
<div class="box" style="left:620px;top:485px;width:257px;height:64px">R$ 28,96</div>
<div class="t lb" style="left:624px;top:574px">Para:</div>
<div class="t lb" style="left:752px;top:574px">Partes:</div>
<div class="box" style="left:620px;top:611px;width:129px;height:64px">10</div>
<div class="box" style="left:748px;top:611px;width:129px;height:64px">Un</div>
<div class="t lb" style="left:624px;top:700px">Margem Especifícia adicionada:</div>
<div class="box" style="left:620px;top:737px;width:257px;height:64px">10%</div>
<div class="t lb" style="left:624px;top:826px">Preço de Venda</div>
<div class="box gbox" style="left:621px;top:851px;width:256px;height:59px">R$ 3,19</div>
<div class="a" style="left:911px;top:454px;width:2px;height:393px;background:#0a9150"></div>

<!-- KPIs -->
<div class="t lb" style="left:944px;top:448px">Matérias Primas Cadastradas</div>
<div class="box" style="left:940px;top:485px;width:226px;height:64px">34</div>
<div class="t lb" style="left:1183px;top:448px">Produtos Cadastrados</div>
<div class="box" style="left:1179px;top:485px;width:226px;height:64px">15</div>
<div class="t lb" style="left:1422px;top:448px">Quantidades Vendidas</div>
<div class="box" style="left:1418px;top:485px;width:226px;height:64px">16871</div>
<div class="t lb" style="left:1661px;top:448px">Total Vendido</div>
<div class="box gbox" style="left:1658px;top:486px;width:225px;height:63px">R$ 9.220,49</div>
<div class="t lb" style="left:944px;top:574px">Top 5 produtos mais vendidos</div>

<!-- chart -->
<div class="a" style="left:941px;top:615px;width:940px;height:278px;border:1px solid #a6a6a6;background:#fff"></div>
<div class="a" style="left:1324px;top:629px;width:1px;height:231px;background:#d9d9d9"></div>
<div class="a" style="left:1595px;top:629px;width:1px;height:231px;background:#d9d9d9"></div>
<div class="a" style="left:1866px;top:629px;width:1px;height:231px;background:#d9d9d9"></div>
<div class="a" style="left:1053px;top:629px;width:1px;height:231px;background:#222"></div>
<div class="bar" style="top:645px;width:92px">R$ 17.019,81</div>
<div class="bar" style="top:688px;width:114px">R$ 21.090,16</div>
<div class="bar" style="top:731px;width:236px">R$ 43.545,97</div>
<div class="bar" style="top:774px;width:358px">R$ 66.075,09</div>
<div class="bar" style="top:817px;width:717px">R$ 132.410,19</div>
<div class="cl" style="top:651px">Empada de Frango</div>
<div class="cl" style="top:694px">Broa de Milho</div>
<div class="cl" style="top:737px">Coxinha</div>
<div class="cl" style="top:780px">Bolo de Chocolate</div>
<div class="cl" style="top:823px">Bolo de Cenoura</div>
<div class="ax" style="left:1023px;top:865px">0</div>
<div class="ax" style="left:1294px;top:865px">50000</div>
<div class="ax" style="left:1565px;top:865px">100000</div>
<!-- ============ BOTTOM ============ -->
<div class="a" style="left:0;top:1028px;width:1920px;height:1px;background:#e1e3e1"></div>
<div class="a" style="left:0;top:1029px;width:45px;height:12px;background:#f3f3f3"></div>
<div class="a" style="left:45px;top:1029px;width:1px;height:12px;background:#e1e3e1"></div>
<div class="a" style="left:46px;top:1029px;width:1830px;height:12px;background:#fff"></div>
<div class="a" style="left:1877px;top:1029px;width:1px;height:12px;background:#e1e3e1"></div>
<div class="a" style="left:1893px;top:1029px;width:1px;height:12px;background:#e1e3e1"></div>
<div class="a" style="left:1909px;top:1029px;width:1px;height:12px;background:#e1e3e1"></div>
<svg class="a" style="left:1882px;top:1031px" width="6" height="7" viewBox="0 0 6 7"><path d="M5 0v7L0 3.5z" fill="#777"/></svg>
<svg class="a" style="left:1898px;top:1031px" width="6" height="7" viewBox="0 0 6 7"><path d="M0 0v7l5-3.5z" fill="#777"/></svg>
<div class="a" style="left:1904px;top:233px;width:16px;height:29px;background:#f9fbfd"></div>
<div class="a" style="left:1908px;top:262px;width:1px;height:767px;background:#e1e3e1"></div>
<div class="a" style="left:1909px;top:262px;width:11px;height:25px;background:#f8f9fa"></div>
<div class="a" style="left:1909px;top:287px;width:11px;height:1px;background:#e1e3e1"></div>
<div class="a" style="left:1909px;top:288px;width:11px;height:741px;background:#fff"></div>
<div class="a" style="left:1910px;top:437px;width:9px;height:26px;border-radius:5px;background:#dadce0"></div>
<div class="a" style="left:1909px;top:996px;width:11px;height:1px;background:#e1e3e1"></div>
<div class="a" style="left:1909px;top:1012px;width:11px;height:1px;background:#e1e3e1"></div>
<svg class="a" style="left:1911px;top:1001px" width="7" height="5" viewBox="0 0 7 5"><path d="M0 5h7L3.5 0z" fill="#777"/></svg>
<svg class="a" style="left:1911px;top:1018px" width="7" height="5" viewBox="0 0 7 5"><path d="M0 0h7L3.5 5z" fill="#777"/></svg>
<div class="a" style="left:0;top:1041px;width:1920px;height:1px;background:#e1e3e1"></div>
<div class="a" style="left:0;top:1042px;width:1920px;height:36px;background:#f9fbfd"></div>
<div class="a" style="left:0;top:1078px;width:1920px;height:2px;background:#000"></div>
<svg class="a" style="left:56px;top:1055px" width="12" height="12" viewBox="0 0 12 12"><path d="M6 0.5v11M0.5 6h11" stroke="#444746" stroke-width="1.8"/></svg>
<svg class="a" style="left:94px;top:1055px" width="16" height="12" viewBox="0 0 16 12"><path d="M1 1.5h14M1 6h14M1 10.5h14" stroke="#444746" stroke-width="1.8"/></svg>
<div class="a" style="left:125px;top:1050px;width:1px;height:20px;background:#444746"></div>
<svg class="a" style="left:127px;top:1059px" width="7" height="5" viewBox="0 0 7 5"><path d="M0 0h7L3.5 4z" fill="#444746"/></svg>
<div class="a" style="left:158px;top:1049px;width:20px;height:20px;border-radius:10px 10px 10px 0;background:#d3dbe5;font-size:11px;line-height:20px;text-align:center;color:#1f1f1f">1</div>
<div class="stab" style="left:184.5px">CAL_GÁS</div>
<svg class="a" style="left:260.5px;top:1059px" width="9" height="5" viewBox="0 0 9 5"><path d="M0 0h9L4.5 5z" fill="#444746"/></svg>
<div class="stab" style="left:293.75px">CAL_FOR</div>
<svg class="a" style="left:369.5px;top:1059px" width="9" height="5" viewBox="0 0 9 5"><path d="M0 0h9L4.5 5z" fill="#444746"/></svg>
<div class="stab" style="left:402.5px">CAD_DES</div>
<svg class="a" style="left:480px;top:1059px" width="9" height="5" viewBox="0 0 9 5"><path d="M0 0h9L4.5 5z" fill="#444746"/></svg>
<div class="stab" style="left:512.5px">CAD_CLI</div>
<svg class="a" style="left:584px;top:1059px" width="9" height="5" viewBox="0 0 9 5"><path d="M0 0h9L4.5 5z" fill="#444746"/></svg>
<div class="stab" style="left:617.5px">MON_PRO</div>
<svg class="a" style="left:700px;top:1059px" width="9" height="5" viewBox="0 0 9 5"><path d="M0 0h9L4.5 5z" fill="#444746"/></svg>
<div class="a" style="left:733px;top:1049px;width:20px;height:20px;border-radius:10px 10px 10px 0;background:#d3dbe5;font-size:11px;line-height:20px;text-align:center;color:#1f1f1f">1</div>
<div class="stab" style="left:759px">SIM_PRO</div>
<svg class="a" style="left:833px;top:1059px" width="9" height="5" viewBox="0 0 9 5"><path d="M0 0h9L4.5 5z" fill="#444746"/></svg>
<div class="a" style="left:866px;top:1049px;width:20px;height:20px;border-radius:10px 10px 10px 0;background:#d3dbe5;font-size:11px;line-height:20px;text-align:center;color:#1f1f1f">1</div>
<div class="stab" style="left:892px">GES_VEN</div>
<svg class="a" style="left:966px;top:1059px" width="9" height="5" viewBox="0 0 9 5"><path d="M0 0h9L4.5 5z" fill="#444746"/></svg>
<div class="stab" style="left:999.5px">REL_PED</div>
<svg class="a" style="left:1074px;top:1059px" width="9" height="5" viewBox="0 0 9 5"><path d="M0 0h9L4.5 5z" fill="#444746"/></svg>
<div class="stab" style="left:1105.75px">REL_ORC</div>
<svg class="a" style="left:1181px;top:1059px" width="9" height="5" viewBox="0 0 9 5"><path d="M0 0h9L4.5 5z" fill="#444746"/></svg>
<div class="stab" style="left:1214px">LIS_PRE</div>
<svg class="a" style="left:1281px;top:1059px" width="9" height="5" viewBox="0 0 9 5"><path d="M0 0h9L4.5 5z" fill="#444746"/></svg>
<div class="stab" style="left:1314px">REL_FLU</div>
<svg class="a" style="left:1386px;top:1059px" width="9" height="5" viewBox="0 0 9 5"><path d="M0 0h9L4.5 5z" fill="#444746"/></svg>
<div class="stab" style="left:1419px">REL_CLI</div>
<svg class="a" style="left:1486px;top:1059px" width="9" height="5" viewBox="0 0 9 5"><path d="M0 0h9L4.5 5z" fill="#444746"/></svg>
<div class="a" style="left:1506px;top:1042px;width:90px;height:36px;background:#e1e9f7"></div>
<div class="stab" style="left:1518px;color:#0b57d0;-webkit-text-stroke:0.45px #0b57d0;letter-spacing:0.4px">DASH1</div>
<svg class="a" style="left:1576px;top:1059px" width="9" height="5" viewBox="0 0 9 5"><path d="M0 0h9L4.5 5z" fill="#0b57d0"/></svg>
<div class="stab" style="left:1608px">DASH2</div>
<svg class="a" style="left:1666px;top:1059px" width="9" height="5" viewBox="0 0 9 5"><path d="M0 0h9L4.5 5z" fill="#444746"/></svg>
<svg class="a" style="left:1706px;top:1054px" width="10" height="13" viewBox="0 0 10 13"><path d="M8 1.5L3 6.5l5 5" fill="none" stroke="#444746" stroke-width="1.8"/></svg>
<svg class="a" style="left:1746px;top:1054px" width="10" height="13" viewBox="0 0 10 13"><path d="M2 1.5l5 5-5 5" fill="none" stroke="#b8bcc0" stroke-width="1.8"/></svg>
<svg class="a" style="left:1887px;top:1055px" width="10" height="13" viewBox="0 0 10 13"><path d="M8 1.5L3 6.5l5 5" fill="none" stroke="#444746" stroke-width="1.8"/></svg>


</body></html>
